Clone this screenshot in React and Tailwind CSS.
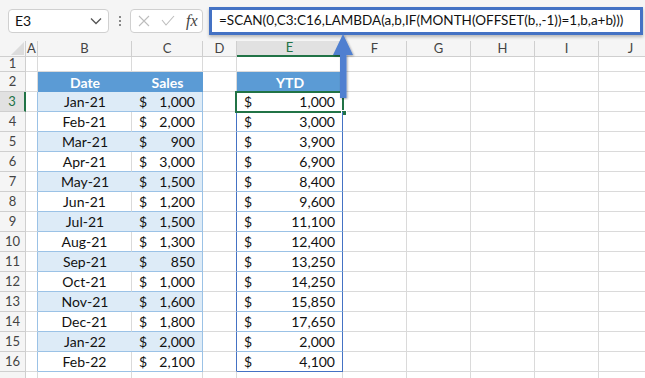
import React from "react";

const colWidths = [12, 94, 71, 34, 106, 64, 64, 64, 64, 64];
const letters = ["A", "B", "C", "D", "E", "F", "G", "H", "I", "J"];

const data = [
  ["Jan-21", "1,000", "1,000"],
  ["Feb-21", "2,000", "3,000"],
  ["Mar-21", "900", "3,900"],
  ["Apr-21", "3,000", "6,900"],
  ["May-21", "1,500", "8,400"],
  ["Jun-21", "1,200", "9,600"],
  ["Jul-21", "1,500", "11,100"],
  ["Aug-21", "1,300", "12,400"],
  ["Sep-21", "850", "13,250"],
  ["Oct-21", "1,000", "14,250"],
  ["Nov-21", "1,600", "15,850"],
  ["Dec-21", "1,800", "17,650"],
  ["Jan-22", "2,000", "2,000"],
  ["Feb-22", "2,100", "4,100"],
];

function RowHead({ n, active, h }) {
  return (
    <div
      className={`shrink-0 w-[26px] flex items-center justify-center text-[13px] border-b border-r ${
        active
          ? "bg-[#e1e1e1] text-[#217346] border-r-2 border-r-[#217346] border-b-[#cfcfcf]"
          : "bg-[#f5f5f5] text-[#444] border-[#cfcfcf]"
      } ${h}`}
    >
      {n}
    </div>
  );
}

function Plain({ w, extra = "" }) {
  return <div className={`shrink-0 h-full border-r border-b border-[#dadada] ${extra}`} style={{ width: w }} />;
}

function Money({ v }) {
  return (
    <div className="flex h-full items-center justify-between pl-[7px] pr-[7px]">
      <span>$</span>
      <span>{v}</span>
    </div>
  );
}

export default function App() {
  return (
    <div
      className="w-[645px] h-[378px] overflow-hidden bg-white text-[#111] relative"
      style={{ fontFamily: "Lato, 'Liberation Sans', sans-serif" }}
    >
      {/* formula bar */}
      <div className="h-[41px] bg-[#f5f5f5] flex items-center pl-[8px] gap-0">
        <div className="w-[101px] h-[24px] bg-white border border-[#d0d0d0] rounded-[4px] flex items-center justify-between pl-[6px] pr-[6px] text-[14px]">
          <span>E3</span>
          <svg width="12" height="8" viewBox="0 0 12 8">
            <path d="M1 1.5 L6 6.5 L11 1.5" fill="none" stroke="#555" strokeWidth="1.3" />
          </svg>
        </div>
        <div className="w-[21px] flex flex-col items-center gap-[2px]">
          <span className="w-[2px] h-[2px] bg-[#888]" />
          <span className="w-[2px] h-[2px] bg-[#888]" />
          <span className="w-[2px] h-[2px] bg-[#888]" />
        </div>
        <div className="w-[73px] h-[24px] bg-white border border-[#d0d0d0] rounded-[4px] flex items-center pl-[7px] pr-[3px] gap-[11px]">
          <svg width="12" height="12" viewBox="0 0 12 12">
            <path d="M1 1 L11 11 M11 1 L1 11" stroke="#bdbdbd" strokeWidth="1.1" />
          </svg>
          <svg width="14" height="11" viewBox="0 0 14 11">
            <path d="M1 5 L5 10 L13 1" fill="none" stroke="#bdbdbd" strokeWidth="1.1" />
          </svg>
          <span className="text-[16px] italic text-[#444] leading-none" style={{ fontFamily: "'Liberation Serif', serif" }}>
            fx
          </span>
        </div>
        <div className="ml-[6px] w-[434px] h-[28px] bg-white border-[3px] border-[#4472c4] shadow-[0_2px_3px_rgba(0,0,0,0.25)] flex items-center pl-[7px] text-[13.5px]">
          =SCAN(0,C3:C16,LAMBDA(a,b,IF(MONTH(OFFSET(b,,-1))=1,b,a+b)))
        </div>
      </div>

      {/* column headers */}
      <div className="flex h-[16px]">
        <div className="shrink-0 w-[26px] h-full bg-[#f5f5f5] border-r border-b border-[#cfcfcf] flex items-end justify-end pr-[1px] pb-[1px]">
          <svg width="13" height="13" viewBox="0 0 13 13">
            <polygon points="13,0 13,13 0,13" fill="#dcdcdc" />
          </svg>
        </div>
        {letters.map((l, i) => (
          <div
            key={l}
            className={`shrink-0 h-full flex items-center justify-center text-[13px] border-r ${
              l === "E"
                ? "bg-[#e1e1e1] text-[#217346] border-b-2 border-b-[#217346] border-r-[#cfcfcf]"
                : "bg-[#f5f5f5] text-[#444] border-b border-[#cfcfcf]"
            }`}
            style={{ width: colWidths[i] }}
          >
            {l}
          </div>
        ))}
      </div>

      {/* row 1 */}
      <div className="flex h-[15px]">
        <RowHead n="1" h="h-full" />
        {colWidths.map((w, i) => (
          <Plain key={i} w={w} />
        ))}
      </div>

      {/* row 2 */}
      <div className="flex h-[20px] text-[14px]">
        <RowHead n="2" h="h-full" />
        <Plain w={12} />
        <div className="shrink-0 w-[94px] h-full bg-[#5b9bd5] text-white font-bold flex items-center justify-center">Date</div>
        <div className="shrink-0 w-[71px] h-full bg-[#5b9bd5] text-white font-bold flex items-center justify-center">Sales</div>
        <Plain w={34} />
        <div className="shrink-0 w-[106px] h-full bg-[#5b9bd5] text-white font-bold flex items-center justify-center">YTD</div>
        {colWidths.slice(5).map((w, i) => (
          <Plain key={i} w={w} />
        ))}
      </div>

      {/* data rows */}
      {data.map(([d, s, y], idx) => {
        const r = idx + 3;
        const band = idx % 2 === 0;
        const last = idx === data.length - 1;
        return (
          <div key={r} className="flex h-[20px] text-[14px]">
            <RowHead n={r} active={r === 3} h="h-full" />
            <Plain w={12} extra="border-r-[#9bc2e6]" />
            <div
              className={`shrink-0 w-[94px] h-full flex items-center justify-center border-b border-[#9bc2e6] ${
                band ? "bg-[#ddebf7]" : "bg-white border-r border-r-[#dadada]"
              }`}
            >
              {d}
            </div>
            <div
              className={`shrink-0 w-[71px] h-full border-b border-r border-[#9bc2e6] ${band ? "bg-[#ddebf7]" : "bg-white"}`}
            >
              <Money v={s} />
            </div>
            <Plain w={34} extra="border-r-[#4472c4]" />
            <div
              className={`relative shrink-0 w-[106px] h-full border-r border-b border-r-[#4472c4] ${
                last ? "border-b-[#4472c4]" : "border-b-[#9bc2e6]"
              }`}
            >
              <Money v={y} />
              {r === 3 && (
                <div className="absolute left-[-2px] top-[-1px] right-[-2px] bottom-[-2px] border-2 border-[#217346]">
                  <div className="absolute right-[-5px] bottom-[-5px] w-[6px] h-[6px] bg-[#217346] border border-white" />
                </div>
              )}
            </div>
            {colWidths.slice(5).map((w, i) => (
              <Plain key={i} w={w} />
            ))}
          </div>
        );
      })}

      {/* row 17, cut off by the window */}
      <div className="flex h-[20px]">
        <RowHead n="" h="h-full" />
        {colWidths.map((w, i) => (
          <Plain key={i} w={w} />
        ))}
      </div>

      {/* arrow */}
      <svg className="absolute left-[330px] top-[32px]" width="26" height="68" viewBox="0 0 26 68">
        <defs>
          <filter id="sh" x="-50%" y="-20%" width="200%" height="140%">
            <feDropShadow dx="1" dy="1" stdDeviation="1" floodColor="#000" floodOpacity="0.35" />
          </filter>
        </defs>
        <path d="M13 2 L23 23 L16.5 23 L16.5 66 L10 66 L10 23 L3 23 Z" fill="#4f7fd0" filter="url(#sh)" />
      </svg>
    </div>
  );
}
